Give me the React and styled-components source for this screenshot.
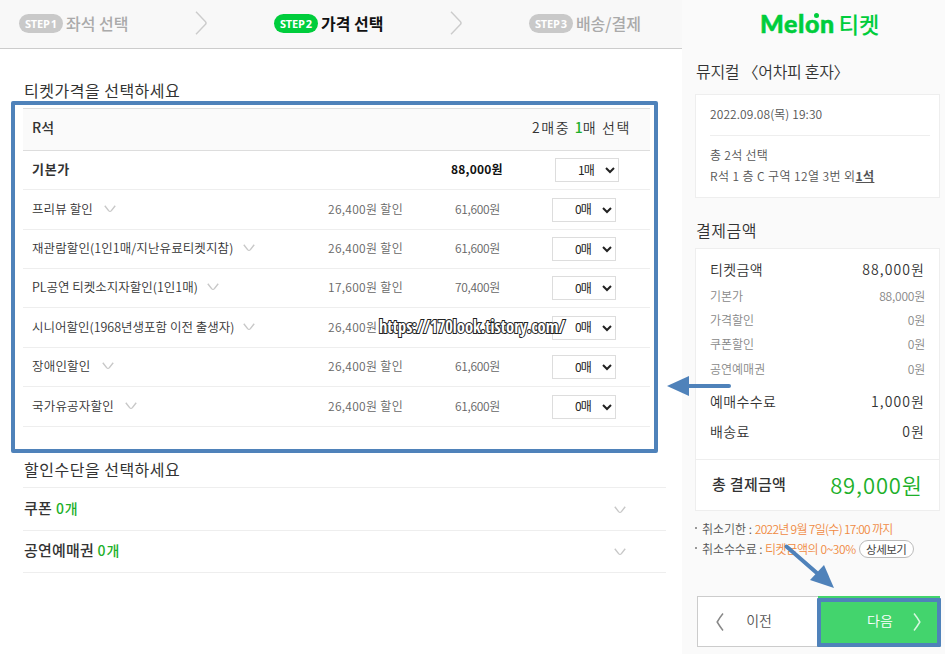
import React, { useState } from 'react';
import styled, { createGlobalStyle } from 'styled-components';

const FONT = `font-family: 'Noto Sans CJK KR', 'Noto Sans', sans-serif;`;
const BLUE = '#4f82ba';
const GREEN = '#1db02a';

const GlobalStyle = createGlobalStyle`
    * {
        box-sizing: border-box;
    }

    body {
        margin: 0;
        background-color: #fff;
        color: #333;
        ${FONT}
    }
`;

const Page = styled.div`
    position: relative;
    display: flex;
    width: 945px;
    height: 654px;
    overflow: hidden;
`;

const Text = styled.span`
    font-size: ${props => props.$size || 12}px;
    font-weight: ${props => props.$weight || 400};
    color: ${props => props.$color || 'inherit'};
    letter-spacing: ${props => props.$spacing || 0}px;
    line-height: 20px;
    white-space: pre;
`;

//#region Left side

const Main = styled.main`
    width: 682px;
`;

const StepBar = styled.header`
    display: flex;
    height: 49px;
    padding: 0 41px 2px 19px;
    align-items: center;
    justify-content: space-between;
    background-color: #f8f8f8;
    border-bottom: 1px solid #ccc;
`;

const Step = styled.div`
    display: flex;
    align-items: center;
    gap: 3px;
    color: ${props => props.$active ? '#111' : '#aaa'};
`;

const StepBadge = styled.span`
    width: 44px;
    height: 19px;
    border-radius: 10px;
    background-color: ${props => props.$active ? '#00cd3c' : '#c9c9c9'};
    color: #fff;
    font: bold 11px/19px 'Open Sans', sans-serif;
    letter-spacing: -0.2px;
    word-spacing: -1.5px;
    text-align: center;
`;

const SectionTitle = styled.h2`
    margin: 0 0 0 24px;
    padding: ${props => props.$padding};
    font-size: 16px;
    font-weight: 400;
    line-height: 20px;
    letter-spacing: 0.5px;
`;

const PriceFrame = styled.section`
    width: 647px;
    height: 352px;
    margin: 0 0 0 11px;
    padding: 3px 4px 0 8px;
    border: 4px solid ${BLUE};
    border-radius: 2px;
`;

const PriceHead = styled.div`
    display: flex;
    height: 43px;
    padding: 0 19px 5px 9px;
    align-items: center;
    justify-content: space-between;
    background-color: #fafafa;
    border-top: 1px solid #ddd;
    border-bottom: 1px solid #ddd;
`;

const PriceList = styled.div`
    display: grid;
    grid-template-rows: 39px 40px 39px 39px 40px 39px 40px;
`;

const PriceRow = styled.div`
    display: grid;
    grid-template-columns: ${props => props.$base ? '292px 127px 101px 1fr' : '296px 127px 97px 1fr'};
    padding: 0 0 2px 9px;
    align-items: center;
    border-bottom: 1px solid #eee;
`;

const PriceLabel = styled.div`
    display: flex;
    align-items: center;
    gap: ${props => props.$gap || 11}px;
`;

const CountSelect = styled.select`
    width: 64px;
    height: 24px;
    margin: 2px 0 0 ${props => props.$base ? 3 : 0}px;
    padding: 0 0 2px 18px;
    border: 1px solid #ddd;
    border-radius: 0;
    background-color: #fff;
    color: #222;
    font-size: 12px;
    letter-spacing: -0.8px;
    ${FONT}
`;

const DiscountList = styled.div`
    width: 643px;
    margin: 0 0 0 23px;
    border-top: 1px solid #eee;
`;

const DiscountRow = styled.div`
    display: flex;
    height: ${props => props.$height}px;
    padding: 0 40px 3px 1px;
    align-items: center;
    justify-content: space-between;
    border-bottom: 1px solid #eee;

    svg {
        margin-top: 4px;
    }
`;

//#endregion

//#region Right side

const Side = styled.aside`
    width: 263px;
    padding: 0 5px 0 13px;
    background-color: #fafafa;
`;

const Logo = styled.div`
    position: relative;
    display: flex;
    height: 47px;
    padding: 0 0 2px 65px;
    align-items: center;
    gap: 4px;
    color: #00cd3c;
`;

const LogoLatin = styled.span`
    font: 900 25px/30px Lato, sans-serif;
    letter-spacing: 0.6px;
    -webkit-text-stroke: 0.5px #00cd3c;
`;

const LogoDot = styled.i`
    position: absolute;
    top: 13px;
    left: 119px;
    width: 5px;
    height: 5px;
    border-radius: 50%;
    background-color: #00cd3c;
`;

const SideTitle = styled.h3`
    margin: 0;
    padding: ${props => props.$padding};
    font-size: 16px;
    font-weight: 350;
    line-height: 20px;
    letter-spacing: ${props => props.$spacing}px;
    white-space: nowrap;
`;

const Card = styled.div`
    height: ${props => props.$height}px;
    border: 1px solid #eee;
    background-color: #fff;
`;

const ShowDate = styled.div`
    display: flex;
    height: 41px;
    margin: 0 9px 0 14px;
    padding-bottom: 2px;
    align-items: center;
    border-bottom: 1px solid #eee;
`;

const Seats = styled.div`
    display: flex;
    flex-direction: column;
    gap: 1px;
    padding: 9px 0 0 14px;
`;

const MoreSeats = styled.b`
    text-decoration: underline;
`;

const Bill = styled.div`
    height: 211px;
    padding: 10px 14px 0 14px;
    border-bottom: 1px solid #eee;
`;

const BillRow = styled.div`
    display: flex;
    height: ${props => props.$height}px;
    justify-content: space-between;
    align-items: flex-start;
`;

const Total = styled.div`
    display: flex;
    height: 50px;
    padding: 0 16px 3px 16px;
    align-items: center;
    justify-content: space-between;
`;

const Notes = styled.ul`
    margin: 0;
    padding: 8px 0 0;
    list-style: none;
`;

const Note = styled.li`
    display: flex;
    height: 20px;
    align-items: center;

    &::before {
        content: '';
        width: 2px;
        height: 2px;
        margin: 0 5px 3px 0;
        background-color: #999;
    }
`;

const DetailButton = styled.button`
    width: 55px;
    height: 18px;
    margin-left: 3px;
    padding: 0;
    border: 1px solid #bbb;
    border-radius: 9px;
    background-color: #fff;
    color: #444;
    font-size: 11.5px;
    line-height: 15px;
    letter-spacing: -0.5px;
    white-space: nowrap;
    ${FONT}
`;

const Buttons = styled.div`
    display: flex;
    margin: 37px 0 0 2px;
`;

const NavButton = styled.button`
    display: flex;
    width: ${props => props.$next ? 122 : 121}px;
    height: 51px;
    padding: ${props => props.$next ? '0 19px 3px 49px' : '0 46px 3px 18px'};
    align-items: center;
    justify-content: space-between;
    border: ${props => props.$next ? 'none' : '1px solid #ccc'};
    border-right: none;
    background-color: ${props => props.$next ? '#43d46d' : '#fff'};
    color: ${props => props.$next ? '#fff' : '#555'};
    ${FONT}

    svg {
        margin-top: 3px;
    }
`;

//#endregion

//#region Marks drawn over the page

const NextMark = styled.div`
    position: absolute;
    top: 598px;
    left: 817px;
    width: 124px;
    height: 49px;
    border: 4px solid ${BLUE};
    border-radius: 1px;
`;

const Arrows = styled.svg`
    position: absolute;
    top: 370px;
    left: 660px;
    pointer-events: none;
`;

const Watermark = styled.div`
    position: absolute;
    top: 317px;
    left: 379px;
    color: #fff;
    font: bold 17px/20px 'Liberation Sans Narrow', 'Open Sans Condensed', 'DejaVu Sans Condensed', sans-serif;
    white-space: nowrap;
    transform: scaleX(0.967);
    transform-origin: left;
    -webkit-text-stroke: 2px #222;
    paint-order: stroke fill;
`;

//#endregion

const prices = [
    { label: '프리뷰 할인', spacing: 0.1, off: '26,400', price: '61,600' },
    { label: '재관람할인(1인1매/지난유료티켓지참)', spacing: 0.1, gap: 10, off: '26,400', price: '61,600' },
    { label: 'PL공연 티켓소지자할인(1인1매)', spacing: 0, gap: 9, off: '17,600', price: '70,400' },
    { label: '시니어할인(1968년생포함 이전 출생자)', spacing: 0, gap: 9, off: '26,400', price: '61,600', covered: true },
    { label: '장애인할인', spacing: 0.2, off: '26,400', price: '61,600' },
    { label: '국가유공자할인', spacing: 0.2, off: '26,400', price: '61,600' },
];

const bill = [
    { label: '티켓금액', value: '88,000원', main: true, height: 27 },
    { label: '기본가', value: '88,000원', height: 24 },
    { label: '가격할인', value: '0원', height: 24 },
    { label: '쿠폰할인', value: '0원', height: 25 },
    { label: '공연예매권', value: '0원', height: 32 },
    { label: '예매수수료', value: '1,000원', main: true, height: 30 },
    { label: '배송료', value: '0원', main: true, height: 20 },
];

const Chevron = () => (
    <svg width="12" height="8" viewBox="0 0 12 8" fill="none" stroke="#c8c8c8" strokeWidth="1.4">
        <path d="M0.8 0.8L4.6 5.6Q6 7.2 7.4 5.6L11.2 0.8" />
    </svg>
);

const StepArrow = () => (
    <svg width="13" height="24" viewBox="0 0 13 24" fill="none" stroke="#ccc" strokeWidth="1.4">
        <path d="M1 0.8L10.3 10.4Q11.8 12 10.3 13.6L1 23.2" />
    </svg>
);

const Angle = ({ left, color }) => (
    <svg width="8" height="18" viewBox="0 0 8 18" fill="none" stroke={color} strokeWidth="1.5">
        <path d={left ? 'M7 0.5Q4.5 3.5 1.2 9Q4.5 14.5 7 17.5' : 'M1 0.5Q3.5 3.5 6.8 9Q3.5 14.5 1 17.5'} />
    </svg>
);

const Count = ({ base }) => {
    const [count, setCount] = useState(base ? '1' : '0');

    return (
        <CountSelect $base={base} value={count} onChange={e => setCount(e.target.value)}>
            <option value="0">0매</option>
            <option value="1">1매</option>
        </CountSelect>
    );
};

const App = () => {
    return (
        <Page>
            <GlobalStyle />
            <Main>
                <StepBar>
                    <Step>
                        <StepBadge>STEP 1</StepBadge>
                        <Text $size={16} $weight={500}>좌석 선택</Text>
                    </Step>
                    <StepArrow />
                    <Step $active>
                        <StepBadge $active>STEP 2</StepBadge>
                        <Text $size={16} $weight={700}>가격 선택</Text>
                    </Step>
                    <StepArrow />
                    <Step>
                        <StepBadge>STEP 3</StepBadge>
                        <Text $size={16} $weight={500}>배송/결제</Text>
                    </Step>
                </StepBar>
                <SectionTitle $padding="31px 0 1px">티켓가격을 선택하세요</SectionTitle>
                <PriceFrame>
                    <PriceHead>
                        <Text $size={14} $weight={500}>R석</Text>
                        <Text $size={14} $weight={350} $spacing={1.6}>
                            2매중 <Text $size={14} $weight={500} $color={GREEN}>1</Text>매 선택
                        </Text>
                    </PriceHead>
                    <PriceList>
                        <PriceRow $base>
                            <PriceLabel><Text $size={13} $weight={700} $spacing={0.7}>기본가</Text></PriceLabel>
                            <span />
                            <Text $size={12} $weight={700} $color="#111" $spacing={0.2}>88,000원</Text>
                            <Count base />
                        </PriceRow>
                        {prices.map(item => (
                            <PriceRow key={item.label}>
                                <PriceLabel $gap={item.gap}>
                                    <Text $size={12.5} $weight={350} $spacing={item.spacing}>{item.label}</Text>
                                    <Chevron />
                                </PriceLabel>
                                <Text $weight={350} $color="#666" $spacing={0.3}>{item.off}원{item.covered ? '' : ' 할인'}</Text>
                                <Text $weight={350} $color="#666" $spacing={-0.3}>{item.covered ? '' : `${item.price}원`}</Text>
                                <Count />
                            </PriceRow>
                        ))}
                    </PriceList>
                </PriceFrame>
                <SectionTitle $padding="6px 0 8px">할인수단을 선택하세요</SectionTitle>
                <DiscountList>
                    <DiscountRow $height={43}>
                        <Text $size={15} $weight={500} $spacing={0.3}>쿠폰 <Text $size={14} $weight={500} $color={GREEN} $spacing={1}>0개</Text></Text>
                        <Chevron />
                    </DiscountRow>
                    <DiscountRow $height={42}>
                        <Text $size={15} $weight={500} $spacing={0.2}>공연예매권 <Text $size={14} $weight={500} $color={GREEN} $spacing={1}>0개</Text></Text>
                        <Chevron />
                    </DiscountRow>
                </DiscountList>
            </Main>
            <Side>
                <Logo>
                    <LogoLatin>Melon</LogoLatin>
                    <Text $size={22} $weight={500}>티켓</Text>
                    <LogoDot />
                </Logo>
                <SideTitle $padding="14px 0 13px 1px" $spacing={-0.3}>뮤지컬 〈어차피 혼자〉</SideTitle>
                <Card $height={104}>
                    <ShowDate><Text $weight={350} $color="#555" $spacing={0.1}>2022.09.08(목) 19:30</Text></ShowDate>
                    <Seats>
                        <Text $weight={350} $color="#555" $spacing={0.3}>총 2석 선택</Text>
                        <Text $weight={350} $color="#555" $spacing={0.4}>R석 1 층 C 구역 12열 3번 외<MoreSeats>1석</MoreSeats></Text>
                    </Seats>
                </Card>
                <SideTitle $padding="22px 0 8px 1px" $spacing={0.5}>결제금액</SideTitle>
                <Card $height={263}>
                    <Bill>
                        {bill.map(row => (
                            <BillRow key={row.label} $height={row.height}>
                                <Text $size={row.main ? 14 : 12} $weight={350} $color={row.main ? '#333' : '#888'} $spacing={row.main ? 0.4 : 0}>{row.label}</Text>
                                <Text $size={row.main ? 14 : 12} $weight={350} $color={row.main ? '#333' : '#888'} $spacing={row.main ? 1.1 : -0.2}>{row.value}</Text>
                            </BillRow>
                        ))}
                    </Bill>
                    <Total>
                        <Text $size={15} $weight={500} $spacing={0.3}>총 결제금액</Text>
                        <Text $size={22} $weight={350} $color={GREEN} $spacing={0.9}>89,000원</Text>
                    </Total>
                </Card>
                <Notes>
                    <Note>
                        <Text $weight={350} $color="#555">취소기한 : <Text $weight={350} $color="#f08a42" $spacing={-0.7}>2022년 9월 7일(수) 17:00 까지</Text></Text>
                    </Note>
                    <Note>
                        <Text $weight={350} $color="#555" $spacing={-0.1}>취소수수료 : <Text $weight={350} $color="#f08a42" $spacing={-0.4}>티켓금액의 0~30%</Text></Text>
                        <DetailButton>상세보기</DetailButton>
                    </Note>
                </Notes>
                <Buttons>
                    <NavButton>
                        <Angle left color="#888" />
                        <Text $size={14} $weight={350}>이전</Text>
                    </NavButton>
                    <NavButton $next>
                        <Text $size={14} $weight={350}>다음</Text>
                        <Angle color="#d5f7df" />
                    </NavButton>
                </Buttons>
            </Side>
            <NextMark />
            <Watermark>https://170look.tistory.com/</Watermark>
            <Arrows width="180" height="224" viewBox="660 370 180 224" fill={BLUE} stroke={BLUE}>
                <path d="M729 386H688" strokeWidth="4" strokeLinecap="round" />
                <path d="M667 386L689 376V396Z" stroke="none" />
                <path d="M786.5 546.5L818 574" strokeWidth="4" strokeLinecap="round" />
                <path d="M834 588L824 565L810 580Z" stroke="none" />
            </Arrows>
        </Page>
    );
};

export default App;
